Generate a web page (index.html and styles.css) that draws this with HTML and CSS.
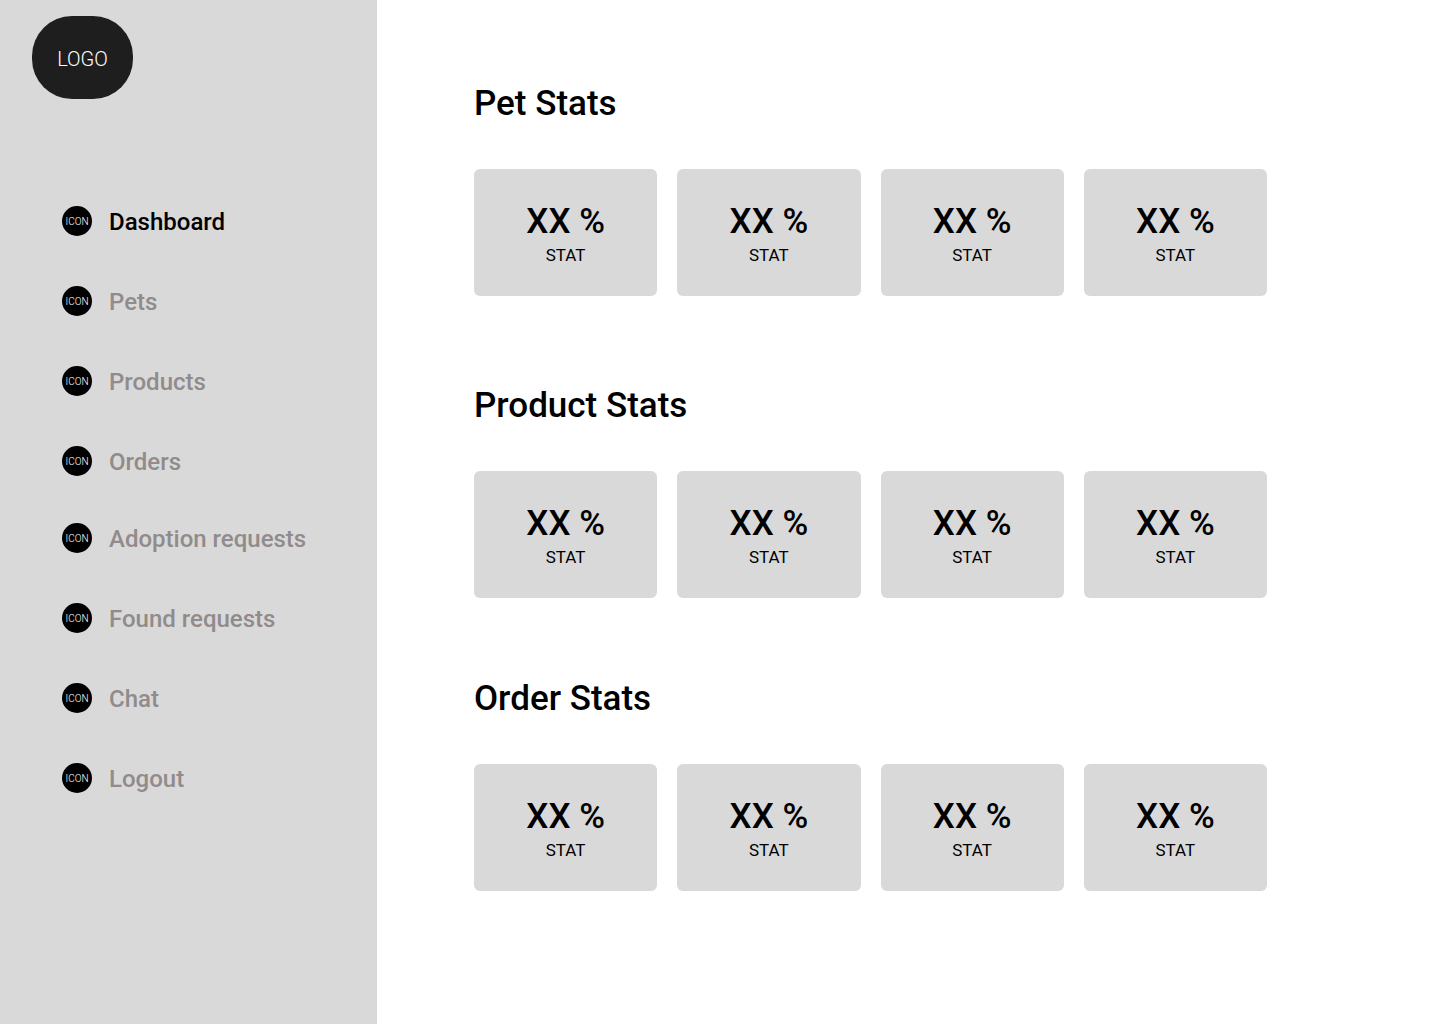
FILE: index.html
```html
<!DOCTYPE html>
<html lang="en">
<head>
<meta charset="utf-8">
<meta name="viewport" content="width=device-width, initial-scale=1">
<title>Dashboard</title>
<link rel="stylesheet" href="styles.css">
</head>
<body>
<div class="app">
  <aside class="sidebar">
    <a class="logo" href="#">LOGO</a>
    <nav class="nav" aria-label="Main">
      <div class="nav-group">
        <a class="nav-link nav-link-active" href="#" aria-current="page"><span class="icon">ICON</span><span class="nav-text">Dashboard</span></a>
        <a class="nav-link" href="#"><span class="icon">ICON</span><span class="nav-text">Pets</span></a>
        <a class="nav-link" href="#"><span class="icon">ICON</span><span class="nav-text">Products</span></a>
        <a class="nav-link" href="#"><span class="icon">ICON</span><span class="nav-text">Orders</span></a>
      </div>
      <div class="nav-group">
        <a class="nav-link" href="#"><span class="icon">ICON</span><span class="nav-text">Adoption requests</span></a>
        <a class="nav-link" href="#"><span class="icon">ICON</span><span class="nav-text">Found requests</span></a>
        <a class="nav-link" href="#"><span class="icon">ICON</span><span class="nav-text">Chat</span></a>
        <a class="nav-link" href="#"><span class="icon">ICON</span><span class="nav-text">Logout</span></a>
      </div>
    </nav>
  </aside>
  <main class="content">
    <section class="stats stats-lead">
      <h2 class="title">Pet Stats</h2>
      <div class="cards">
        <div class="card"><span class="value">XX %</span><span class="label">STAT</span></div>
        <div class="card"><span class="value">XX %</span><span class="label">STAT</span></div>
        <div class="card"><span class="value">XX %</span><span class="label">STAT</span></div>
        <div class="card"><span class="value">XX %</span><span class="label">STAT</span></div>
      </div>
    </section>
    <section class="stats">
      <h2 class="title">Product Stats</h2>
      <div class="cards">
        <div class="card"><span class="value">XX %</span><span class="label">STAT</span></div>
        <div class="card"><span class="value">XX %</span><span class="label">STAT</span></div>
        <div class="card"><span class="value">XX %</span><span class="label">STAT</span></div>
        <div class="card"><span class="value">XX %</span><span class="label">STAT</span></div>
      </div>
    </section>
    <section class="stats">
      <h2 class="title">Order Stats</h2>
      <div class="cards">
        <div class="card"><span class="value">XX %</span><span class="label">STAT</span></div>
        <div class="card"><span class="value">XX %</span><span class="label">STAT</span></div>
        <div class="card"><span class="value">XX %</span><span class="label">STAT</span></div>
        <div class="card"><span class="value">XX %</span><span class="label">STAT</span></div>
      </div>
    </section>
  </main>
</div>
</body>
</html>
```
FILE: styles.css
```css
* {
  box-sizing: border-box;
}

body {
  margin: 0;
  background: #fff;
  color: #000;
  font-family: Roboto, "Liberation Sans", sans-serif;
}

.app {
  display: flex;
  min-height: 100vh;
}

.sidebar {
  flex: 0 0 377px;
  padding: 16px 32px;
  background: #d9d9d9;
}

.logo {
  display: flex;
  align-items: center;
  justify-content: center;
  width: 101px;
  height: 83px;
  padding-top: 3px;
  border-radius: 40px;
  background: #1e1e1e;
  color: #fff;
  font-size: 20px;
  font-weight: 300;
  text-decoration: none;
}

.nav {
  display: flex;
  flex-direction: column;
  gap: 47px;
  margin-top: 107px;
  padding-left: 30px;
}

.nav-group {
  display: flex;
  flex-direction: column;
  gap: 50px;
}

.nav-link {
  display: flex;
  align-items: center;
  gap: 17px;
  height: 30px;
  color: #918b8b;
  font-size: 24px;
  font-weight: 500;
  line-height: 30px;
  text-decoration: none;
}

.nav-link-active {
  color: #000;
}

.nav-text {
  padding-top: 2px;
}

.icon {
  display: flex;
  align-items: center;
  justify-content: center;
  width: 30px;
  height: 30px;
  padding-top: 2px;
  border-radius: 50%;
  background: #000;
  color: #fff;
  font-size: 10px;
  font-weight: 300;
}

.content {
  flex: 1;
  padding: 82px 173px 54px 97px;
}

.stats {
  padding-bottom: 79px;
}

.stats-lead {
  padding-bottom: 88px;
}

.title {
  margin: 0;
  padding-bottom: 43px;
  font-size: 35px;
  font-weight: 500;
  line-height: 44px;
}

.cards {
  display: grid;
  grid-template-columns: repeat(4, 1fr);
  gap: 20px;
}

.card {
  display: flex;
  flex-direction: column;
  align-items: center;
  padding: 31px 0 30px;
  border-radius: 6px;
  background: #d9d9d9;
}

.value {
  font-size: 35px;
  font-weight: 500;
  line-height: 44px;
}

.label {
  font-size: 17px;
  line-height: 22px;
}
```
